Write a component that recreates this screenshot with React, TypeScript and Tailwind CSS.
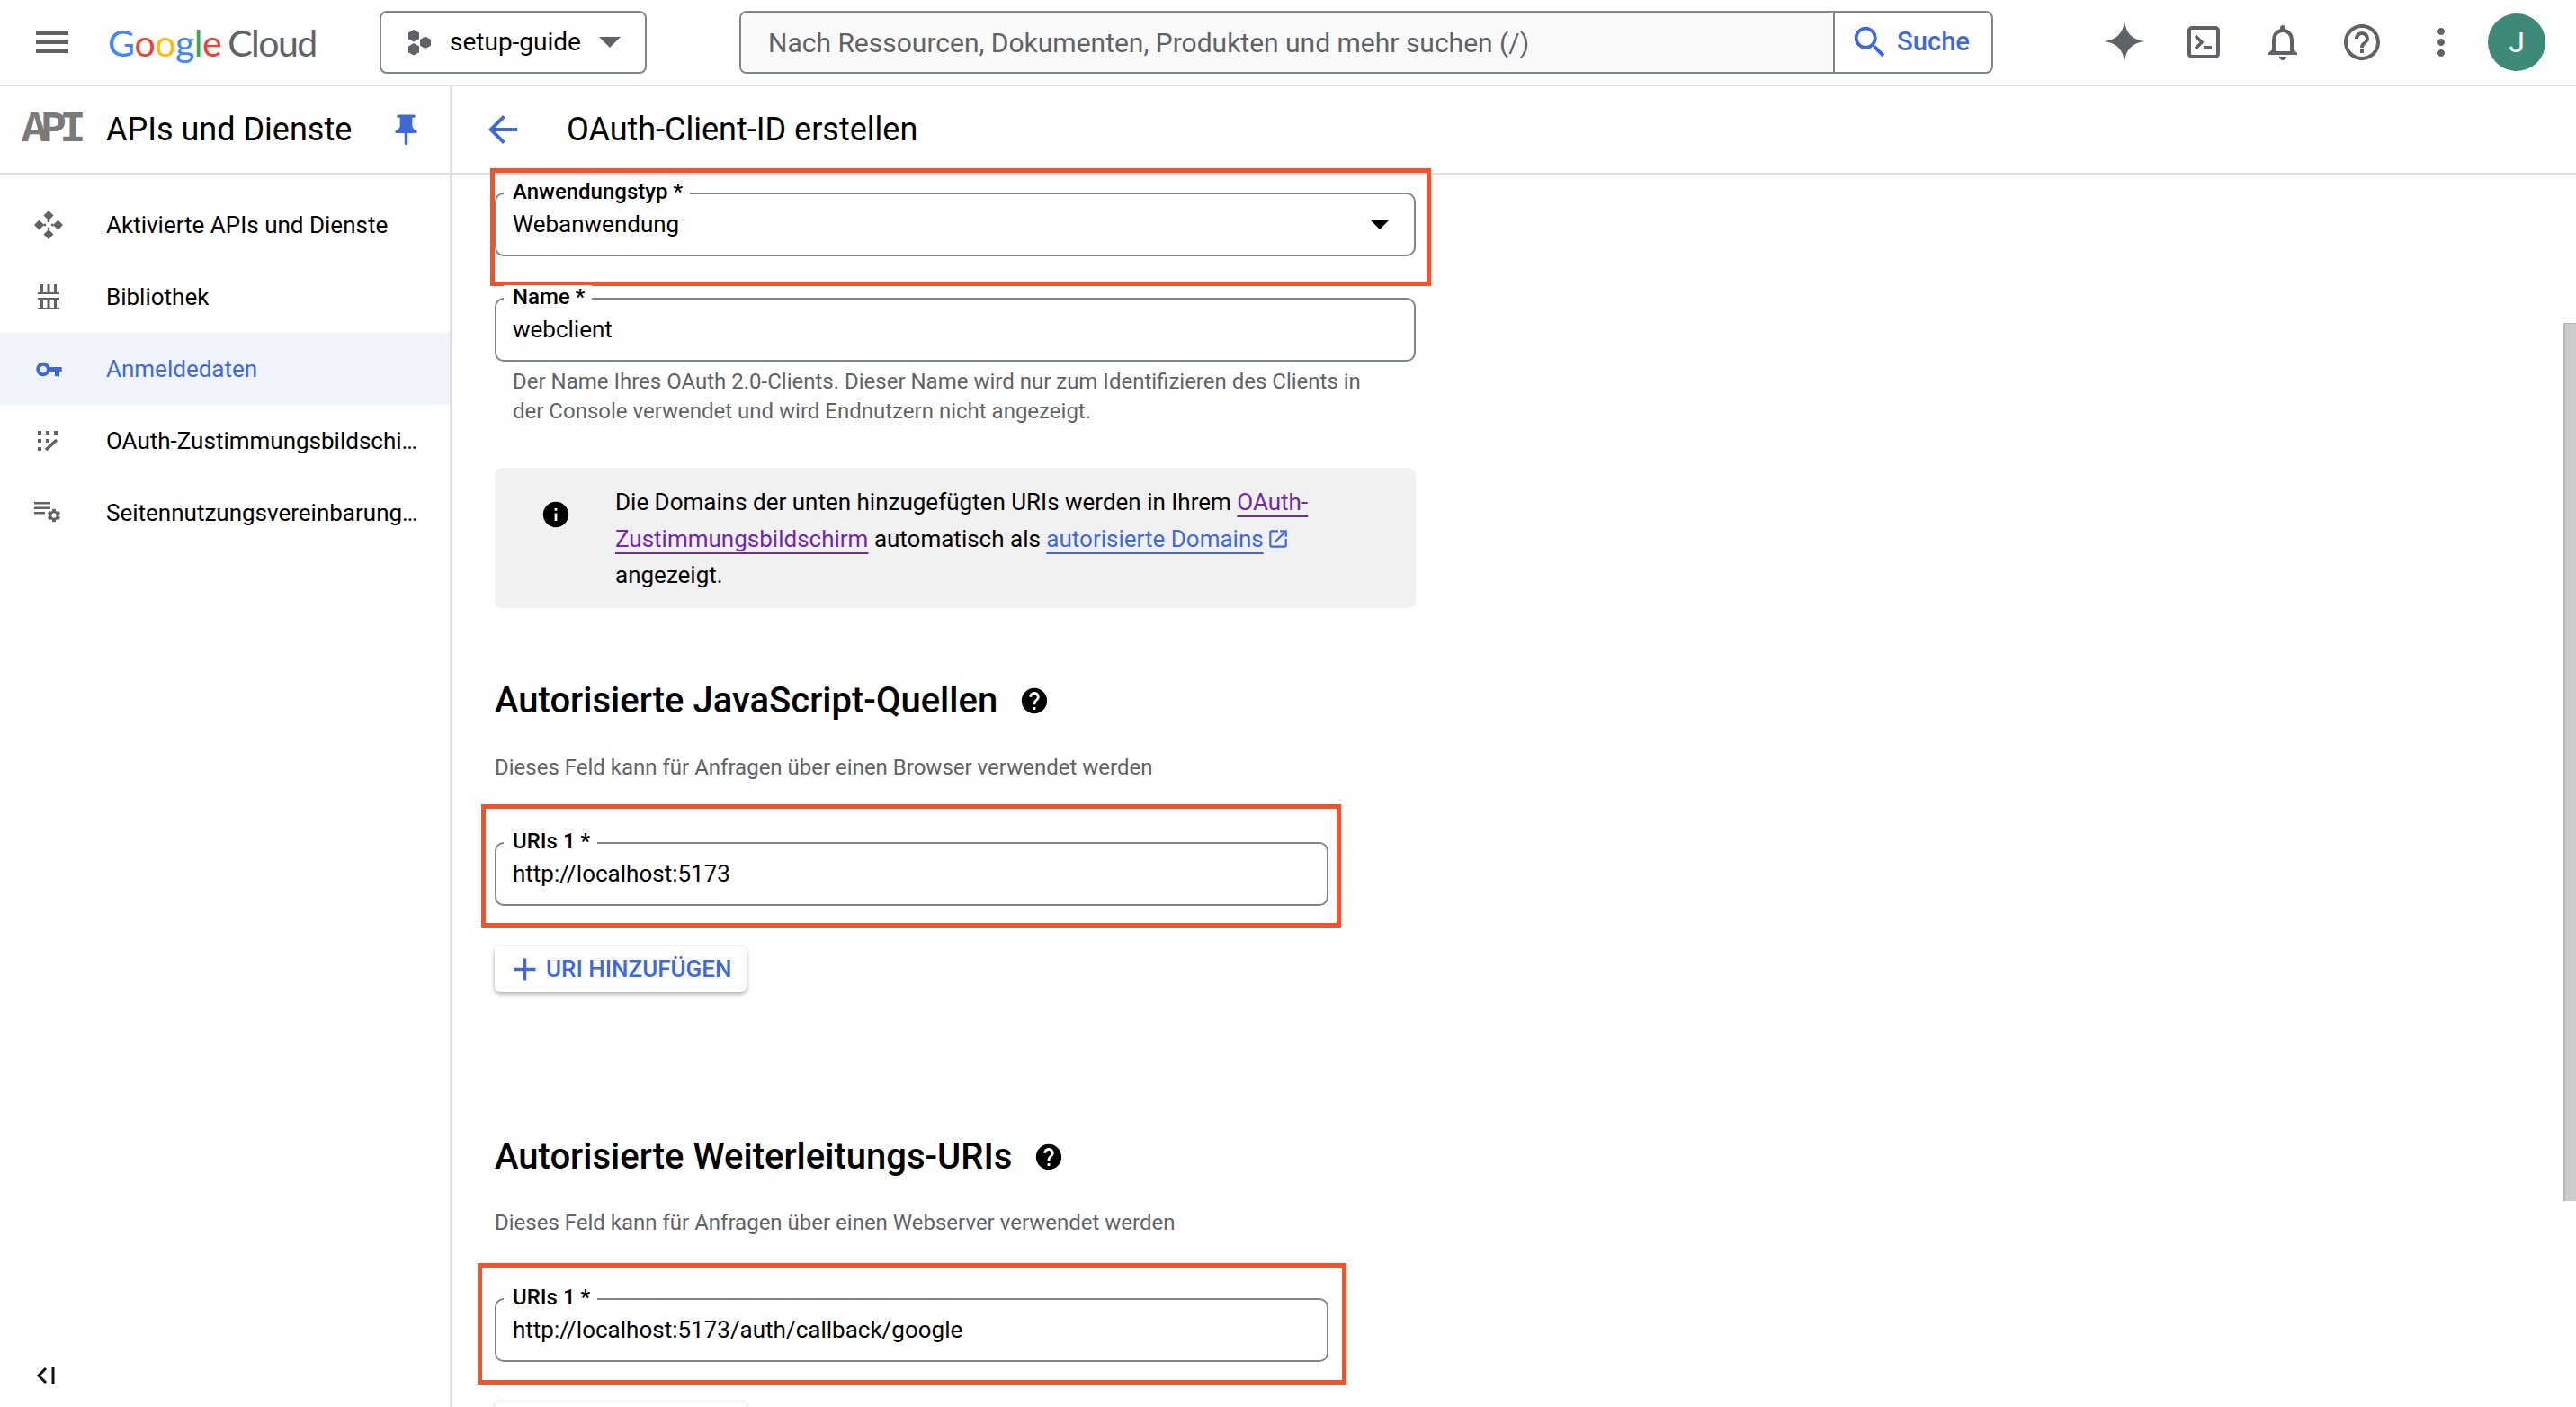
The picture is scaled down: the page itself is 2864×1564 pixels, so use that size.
import React from 'react';

const FONT = "font-['Roboto',sans-serif]";

function MatIcon({ d, size, className }: { d: string; size: number; className?: string }) {
  return (
    <svg width={size} height={size} viewBox="0 0 24 24" fill="currentColor" className={className}>
      <path d={d} fillRule="evenodd" />
    </svg>
  );
}

const ICONS = {
  menu: 'M3 18h18v-2H3v2zm0-5h18v-2H3v2zm0-7v2h18V6H3z',
  search:
    'M15.5 14h-.79l-.28-.27C15.41 12.59 16 11.11 16 9.5 16 5.91 13.09 3 9.5 3S3 5.91 3 9.5 5.91 16 9.5 16c1.61 0 3.09-.59 4.23-1.57l.27.28v.79l5 4.99L20.49 19l-4.99-5zm-6 0C7.01 14 5 11.99 5 9.5S7.01 5 9.5 5 14 7.01 14 9.5 11.99 14 9.5 14z',
  bell: 'M12 22c1.1 0 2-.9 2-2h-4c0 1.1.9 2 2 2zm6-6v-5c0-3.07-1.63-5.64-4.5-6.32V4c0-.83-.67-1.5-1.5-1.5s-1.5.67-1.5 1.5v.68C7.64 5.36 6 7.92 6 11v5l-2 2v1h16v-1l-2-2zm-2 1H8v-6c0-2.48 1.51-4.5 4-4.5s4 2.02 4 4.5v6z',
  helpOutline:
    'M11 18h2v-2h-2v2zm1-16C6.48 2 2 6.48 2 12s4.48 10 10 10 10-4.48 10-10S17.52 2 12 2zm0 18c-4.41 0-8-3.59-8-8s3.59-8 8-8 8 3.59 8 8-3.59 8-8 8zm0-14c-2.21 0-4 1.79-4 4h2c0-1.1.9-2 2-2s2 .9 2 2c0 2-3 1.75-3 5h2c0-2.25 3-2.5 3-5 0-2.21-1.79-4-4-4z',
  more: 'M12 8c1.1 0 2-.9 2-2s-.9-2-2-2-2 .9-2 2 .9 2 2 2zm0 2c-1.1 0-2 .9-2 2s.9 2 2 2 2-.9 2-2-.9-2-2-2zm0 6c-1.1 0-2 .9-2 2s.9 2 2 2 2-.9 2-2-.9-2-2-2z',
  pin: 'M16 9V4h1c.55 0 1-.45 1-1s-.45-1-1-1H7c-.55 0-1 .45-1 1s.45 1 1 1h1v5c0 1.66-1.34 3-3 3v2h5.97v7l1 1 1-1v-7H19v-2c-1.66 0-3-1.34-3-3z',
  back: 'M20 11H7.83l5.59-5.59L12 4l-8 8 8 8 1.41-1.41L7.83 13H20v-2z',
  key: 'M12.65 10C11.83 7.67 9.61 6 7 6c-3.31 0-6 2.69-6 6s2.69 6 6 6c2.61 0 4.83-1.67 5.65-4H17v4h4v-4h2v-4H12.65zM7 15c-1.66 0-3-1.34-3-3s1.34-3 3-3 3 1.34 3 3-1.34 3-3 3z',
  info: 'M12 2C6.48 2 2 6.48 2 12s4.48 10 10 10 10-4.48 10-10S17.52 2 12 2zm1 15h-2v-6h2v6zm0-8h-2V7h2v2z',
  help: 'M12 2C6.48 2 2 6.48 2 12s4.48 10 10 10 10-4.48 10-10S17.52 2 12 2zm1 17h-2v-2h2v2zm2.07-7.75l-.9.92C13.45 12.9 13 13.5 13 15h-2v-.5c0-1.1.45-2.1 1.17-2.83l1.24-1.26c.37-.36.59-.86.59-1.41 0-1.1-.9-2-2-2s-2 .9-2 2H8c0-2.21 1.79-4 4-4s4 1.79 4 4c0 .88-.36 1.68-.93 2.25z',
  external:
    'M19 19H5V5h7V3H5c-1.11 0-2 .9-2 2v14c0 1.1.89 2 2 2h14c1.1 0 2-.9 2-2v-7h-2v7zM14 3v2h3.59l-9.83 9.83 1.41 1.41L19 6.41V10h2V3h-7z',
  add: 'M19 13h-6v6h-2v-6H5v-2h6V5h2v6h6v2z',
  gear: 'M19.14 12.94c.04-.3.06-.61.06-.94 0-.32-.02-.64-.07-.94l2.03-1.58a.49.49 0 0 0 .12-.61l-1.92-3.32a.488.488 0 0 0-.59-.22l-2.39.96c-.5-.38-1.03-.7-1.62-.94l-.36-2.54a.484.484 0 0 0-.48-.41h-3.84c-.24 0-.43.17-.47.41l-.36 2.54c-.59.24-1.13.57-1.62.94l-2.39-.96c-.22-.08-.47 0-.59.22L2.74 8.87c-.12.21-.08.47.12.61l2.03 1.58c-.05.3-.09.63-.09.94s.02.64.07.94l-2.03 1.58a.49.49 0 0 0-.12.61l1.92 3.32c.12.22.37.29.59.22l2.39-.96c.5.38 1.03.7 1.62.94l.36 2.54c.05.24.24.41.48.41h3.84c.24 0 .44-.17.47-.41l.36-2.54c.59-.24 1.13-.56 1.62-.94l2.39.96c.22.08.47 0 .59-.22l1.92-3.32c.12-.22.07-.47-.12-.61l-2.01-1.58zM12 15.6c-1.98 0-3.6-1.62-3.6-3.6s1.62-3.6 3.6-3.6 3.6 1.62 3.6 3.6-1.62 3.6-3.6 3.6z',
};

function ApiNavIcon() {
  return (
    <svg width="32" height="32" viewBox="0 0 32 32" fill="#5f6368">
      <path d="M16 0l5.5 5.5L16 11l-5.5-5.5zM16 21l5.5 5.5L16 32l-5.5-5.5zM0 16l5.5-5.5L11 16l-5.5 5.500zM21 16l5.500-5.500L32 16l-5.500 5.500z" />
      <rect x="14.700" y="10.500" width="2.600" height="2.600" />
      <rect x="14.700" y="18.900" width="2.600" height="2.600" />
      <rect x="10.500" y="14.700" width="2.600" height="2.600" />
      <rect x="18.900" y="14.700" width="2.600" height="2.600" />
    </svg>
  );
}

function LibraryIcon() {
  return (
    <svg width="24" height="28" viewBox="0 0 24 28" fill="#5f6368">
      <path d="M3 0h3v9H3zM10.500 0h3v9h-3zM18 0h3v9h-3zM0 9h24v2H0zM0 15h24v2H0zM3 17h3v9H3zM10.500 17h3v9h-3zM18 17h3v9h-3zM0 26h24v2H0z" />
    </svg>
  );
}

function WizardIcon() {
  return (
    <svg width="24" height="22" viewBox="0 0 24 22" fill="#5f6368">
      <path d="M0 0h4v4H0zM9 0h4v4H9zM18 0h4v4h-4zM0 9h4v4H0zM9 9h4v4H9zM0 18h4v4H0z" />
      <path d="M9 21l12-11" stroke="#5f6368" strokeWidth="3.500" />
    </svg>
  );
}

function PolicyIcon() {
  return (
    <svg width="32" height="24" viewBox="0 0 32 24" fill="#5f6368">
      <path d="M0 0h18v2.500H0zM0 5.500h18V8H0zM0 11h12v2.500H0z" />
      <svg x="13" y="6" width="18" height="18" viewBox="0 0 24 24">
        <path d={ICONS.gear} />
      </svg>
    </svg>
  );
}

const navItems = [
  { label: 'Aktivierte APIs und Dienste', icon: <ApiNavIcon /> },
  { label: 'Bibliothek', icon: <LibraryIcon /> },
  { label: 'Anmeldedaten', icon: <MatIcon d={ICONS.key} size={31} className="text-[#3f69d8]" />, active: true },
  { label: 'OAuth-Zustimmungsbildschirm', icon: <WizardIcon /> },
  { label: 'Seitennutzungsvereinbarungen', icon: <PolicyIcon /> },
];

function Field({
  label,
  value,
  widthClass,
  markClass,
  arrow,
  className,
}: {
  label: string;
  value: string;
  widthClass: string;
  markClass?: string;
  arrow?: boolean;
  className?: string;
}) {
  return (
    <div className={`relative h-[71px] shrink-0 ${widthClass} ${className ?? ''}`}>
      <div className="flex h-full items-center justify-between rounded-[10px] border-2 border-[#80868b] pl-[18px] pr-[28px] text-[26px] text-black">
        <span>{value}</span>
        {arrow && <span className="h-0 w-0 border-x-[10px] border-t-[10px] border-x-transparent border-t-black" />}
      </div>
      <span className="absolute -top-[14px] left-[10px] bg-white pr-[8px] pl-[10px] text-[24px] leading-[26px] font-medium text-black">
        {label}
      </span>
      {markClass && <div className={`pointer-events-none absolute border-[5px] border-[#f0532d] ${markClass}`} />}
    </div>
  );
}

function AddUriButton({ className }: { className?: string }) {
  return (
    <button className={`flex h-[51px] w-[280px] shrink-0 items-center rounded-[6px] bg-white pl-[13px] text-[26px] font-medium text-[#3f69d8] shadow-[0_2px_5px_rgba(0,0,0,0.35)] ${className ?? ''}`}>
      <MatIcon d={ICONS.add} size={41} />
      <span className="ml-[3px]">URI HINZUFÜGEN</span>
    </button>
  );
}

function SectionTitle({ children, className }: { children: string; className?: string }) {
  return (
    <div className={`flex h-[48px] shrink-0 items-center gap-[24px] ${className ?? ''}`}>
      <h2 className="text-[40px] leading-[48px] font-medium text-black">{children}</h2>
      <MatIcon d={ICONS.help} size={34} className="text-black" />
    </div>
  );
}

function Header() {
  return (
    <header className="flex h-[96px] shrink-0 items-center border-b-2 border-[#e0e0e0] bg-white pl-[34px]">
      <MatIcon d={ICONS.menu} size={48} className="text-[#5f6368]" />
      <div className="ml-[38px] flex w-[232px] items-center font-['Lato',sans-serif] text-[41px] leading-none tracking-[-0.5px]">
        <span className="text-[#4285f4]">G</span>
        <span className="text-[#ea4335]">o</span>
        <span className="text-[#fbbc04]">o</span>
        <span className="text-[#4285f4]">g</span>
        <span className="text-[#34a853]">l</span>
        <span className="text-[#ea4335]">e</span>
        <span className="ml-[7px] tracking-[-1.5px] text-[#5f6368]">Cloud</span>
      </div>
      <button className="ml-[70px] flex h-[70px] w-[297px] items-center rounded-[8px] border-2 border-[#80868b] pl-[28px] text-[28px] text-black">
        <svg width="30" height="30" viewBox="0 0 30 30" fill="#5f6368">
          <path d="M8 1l6 3.400v6.800l-6 3.400-6-3.400V4.400zM8 16l6 3.400v6.800l-6 3.400-6-3.400v-6.800zM21 8.500l6 3.400v6.800l-6 3.400-6-3.400v-6.800z" />
        </svg>
        <span className="ml-[18px]">setup-guide</span>
        <span className="ml-[20px] h-0 w-0 border-x-[12px] border-t-[12px] border-x-transparent border-t-[#5f6368]" />
      </button>
      <div className="ml-[103px] flex h-[70px] w-[1394px] overflow-hidden rounded-[8px] border-2 border-[#80868b]">
        <div className="flex flex-1 items-center bg-[#fafafa] pl-[30px] text-[30px] text-[#5f6368]">
          Nach Ressourcen, Dokumenten, Produkten und mehr suchen (/)
        </div>
        <div className="flex w-[176px] items-center border-l-2 border-[#80868b] pl-[16px] text-[29.2px] font-medium text-[#3f69d8]">
          <MatIcon d={ICONS.search} size={46} />
          <span className="ml-[7px]">Suche</span>
        </div>
      </div>
      <div className="ml-[102px] flex text-[#5f6368]">
        <div className="flex w-[88px] justify-center">
          <svg width="46" height="46" viewBox="0 0 46 46" fill="currentColor">
            <path d="M23 0c1 13 9 22 23 23-14 1-22 10-23 23-1-13-9-22-23-23 14-1 22-10 23-23z" />
          </svg>
        </div>
        <div className="flex w-[88px] items-center justify-center">
          <svg width="36" height="36" viewBox="0 0 36 36" fill="none">
            <rect x="2" y="2" width="32" height="32" rx="3" stroke="currentColor" strokeWidth="4" />
            <path d="M9 11l7 7-7 7" stroke="currentColor" strokeWidth="3.500" />
            <path d="M18 24h9" stroke="currentColor" strokeWidth="4" />
          </svg>
        </div>
        <div className="flex w-[88px] justify-center">
          <MatIcon d={ICONS.bell} size={48} />
        </div>
        <div className="flex w-[88px] justify-center">
          <MatIcon d={ICONS.helpOutline} size={48} />
        </div>
        <div className="flex w-[88px] justify-center">
          <MatIcon d={ICONS.more} size={48} />
        </div>
      </div>
      <div className="ml-[8px] flex h-[64px] w-[64px] items-center justify-center rounded-full bg-[#3d8a7a] text-[32px] text-white">
        J
      </div>
    </header>
  );
}

function Sidebar() {
  return (
    <aside className="flex w-[502px] shrink-0 flex-col border-r-2 border-[#e0e0e0]">
      <div className="flex h-[98px] shrink-0 items-center border-b-2 border-[#e0e0e0] pl-[24px]">
        <span className="flex w-[94px] font-['Liberation_Mono',monospace] text-[48px] leading-none font-bold tracking-[-7.5px] text-[#7a7a7a]">
          API
        </span>
        <span className="text-[36px] text-black">APIs und Dienste</span>
        <MatIcon d={ICONS.pin} size={41} className="ml-[40px] text-[#3f69d8]" />
      </div>
      <nav className="flex flex-col pt-[16px]">
        {navItems.map((item) => (
          <div
            key={item.label}
            className={`flex h-[80px] items-center text-[26px] ${item.active ? 'bg-[#f0f4fd] text-[#3f69d8]' : 'text-black'}`}
          >
            <div className="flex w-[108px] shrink-0 justify-center">{item.icon}</div>
            <span className="ml-[10px] w-[350px] truncate">{item.label}</span>
          </div>
        ))}
      </nav>
      <div className="mt-auto flex h-[70px] items-start pl-[40px] pt-[25px]">
        <svg width="24" height="20" viewBox="0 0 24 20" fill="none" stroke="#111" strokeWidth="3">
          <path d="M11 2l-8 8 8 8M19 1v18" />
        </svg>
      </div>
    </aside>
  );
}

export default function App() {
  return (
    <div className={`relative flex h-[1564px] w-[2864px] flex-col overflow-hidden bg-white ${FONT}`}>
      <Header />
      <div className="flex min-h-0 flex-1">
        <Sidebar />
        <main className="flex min-w-0 flex-1 flex-col">
          <div className="flex h-[98px] shrink-0 items-center border-b-2 border-[#e0e0e0] pl-[33px]">
            <MatIcon d={ICONS.back} size={48} className="text-[#3f69d8]" />
            <h1 className="ml-[47px] text-[36px] text-black">OAuth-Client-ID erstellen</h1>
          </div>
          <div className="flex flex-col pl-[48px]">
            <Field
              label="Anwendungstyp *"
              value="Webanwendung"
              arrow
              widthClass="w-[1024px]"
              className="mt-[20px]"
              markClass="-top-[27px] -right-[17px] -bottom-[33px] -left-[5px]"
            />
            <Field label="Name *" value="webclient" widthClass="w-[1024px]" className="mt-[46px]" />
            <p className="mt-[6px] w-[1024px] pl-[20px] text-[24px] leading-[33px] text-[#5f6368]">
              Der Name Ihres OAuth 2.0-Clients. Dieser Name wird nur zum Identifizieren des Clients in
              <br />
              der Console verwendet und wird Endnutzern nicht angezeigt.
            </p>
            <div className="mt-[46px] flex h-[156px] w-[1024px] shrink-0 rounded-[8px] bg-[#f1f1f1] pl-[51px] pt-[18px]">
              <MatIcon d={ICONS.info} size={34} className="mt-[17px] text-black" />
              <p className="ml-[49px] w-[800px] text-[26px] leading-[40.500px] text-black">
                Die Domains der unten hinzugefügten URIs werden in Ihrem{' '}
                <span className="text-[#7328a8] underline decoration-[2px] underline-offset-[6px]">
                  OAuth-Zustimmungsbildschirm
                </span>{' '}
                automatisch als{' '}
                <span className="text-[#3f69d8] underline decoration-[2px] underline-offset-[6px]">autorisierte Domains</span>
                <MatIcon d={ICONS.external} size={26} className="ml-[3px] inline-block align-[-4px] text-[#3f69d8]" />
                <br />
                angezeigt.
              </p>
            </div>
            <SectionTitle className="mt-[79px]">Autorisierte JavaScript-Quellen</SectionTitle>
            <p className="mt-[34px] text-[24px] leading-[32px] text-[#5f6368]">
              Dieses Feld kann für Anfragen über einen Browser verwendet werden
            </p>
            <Field
              label="URIs 1 *"
              value="http://localhost:5173"
              widthClass="w-[927px]"
              className="mt-[67px]"
              markClass="-top-[42px] -right-[14px] -bottom-[24px] -left-[15px]"
            />
            <AddUriButton className="mt-[45px]" />
            <SectionTitle className="mt-[159px]">Autorisierte Weiterleitungs-URIs</SectionTitle>
            <p className="mt-[33px] text-[24px] leading-[32px] text-[#5f6368]">
              Dieses Feld kann für Anfragen über einen Webserver verwendet werden
            </p>
            <Field
              label="URIs 1 *"
              value="http://localhost:5173/auth/callback/google"
              widthClass="w-[927px]"
              className="mt-[68px]"
              markClass="-top-[39px] -right-[20px] -bottom-[25px] -left-[19px]"
            />
            <AddUriButton className="mt-[44px]" />
          </div>
        </main>
      </div>
      <div className="absolute top-[359px] right-0 h-[976px] w-[14px] border-t border-l-2 border-[#b5b5b5] bg-[#cbcbcb]" />
    </div>
  );
}
